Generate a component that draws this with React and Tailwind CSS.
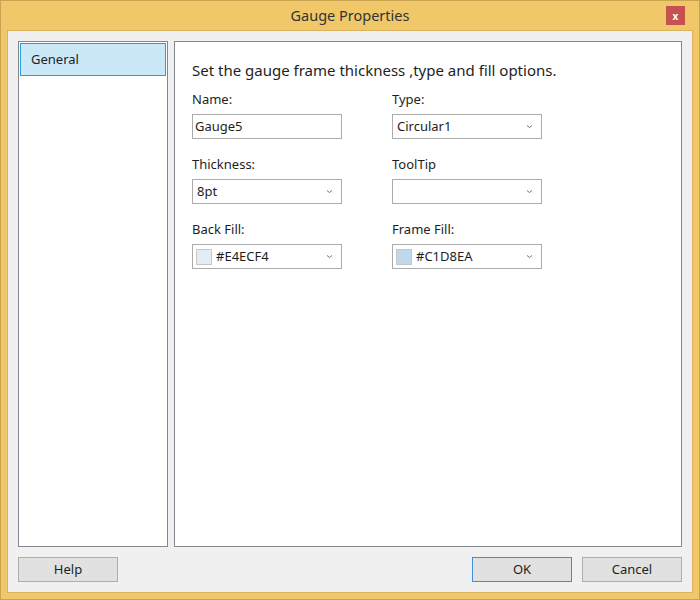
import React from "react";

const font = { fontFamily: '"Noto Sans", "Open Sans", sans-serif' };

function Chevron() {
  return (
    <svg width="7" height="5" viewBox="0 0 7 5" className="shrink-0">
      <path d="M1 1.5 L3.5 3.5 L6 1.5" fill="none" stroke="#707070" strokeWidth="1" />
    </svg>
  );
}

function Label({ children }) {
  return (
    <div className="h-[18px] flex items-end text-[13px] leading-[16px] text-[#1e1e1e] mb-[7px]">
      {children}
    </div>
  );
}

function TextBox({ value }) {
  return (
    <div className="h-[25px] w-[150px] border border-[#ababab] bg-white flex items-center pl-[2px] text-[13px] text-[#1e1e1e]">
      {value}
    </div>
  );
}

function Combo({ value, swatch }) {
  return (
    <div className="h-[25px] w-[150px] border border-[#ababab] bg-white flex items-center text-[13px] text-[#1e1e1e] pr-[8px]">
      {swatch ? (
        <div className="flex items-center pl-[3px] gap-[4px] flex-1">
          <div className="w-[16px] h-[16px] border border-[#c8c8c8]" style={{ background: swatch }} />
          <span>{value}</span>
        </div>
      ) : (
        <span className="pl-[4px] flex-1">{value}</span>
      )}
      <Chevron />
    </div>
  );
}

function Field({ label, children }) {
  return (
    <div className="flex flex-col w-[150px]">
      <Label>{label}</Label>
      {children}
    </div>
  );
}

function Button({ children, primary }) {
  return (
    <div
      className={
        "w-[100px] h-[25px] flex items-center justify-center bg-[#e1e1e1] text-[13px] text-[#1e1e1e] border " +
        (primary ? "border-[#3c8fe0]" : "border-[#adadad]")
      }
    >
      {children}
    </div>
  );
}

export default function App() {
  return (
    <div
      style={font}
      className="w-[700px] h-[600px] bg-[#f0c86a] border border-[#c9a450] flex flex-col px-[6px] pb-[6px]"
    >
      <div className="relative h-[29px] flex items-center justify-center text-[14.5px] text-[#333333]">
        Gauge Properties
        <div className="absolute right-[8px] top-[5px] w-[19px] h-[19px] bg-[#c75050] flex items-center justify-center text-white text-[10px] font-bold leading-none">
          x
        </div>
      </div>
      <div className="flex-1 border border-[#d9b35e] bg-[#f0f0f0] flex flex-col p-[10px] gap-[10px]">
        <div className="flex-1 flex gap-[6px]">
          <div className="w-[150px] border border-[#828790] bg-white p-[1px]">
            <div className="h-[33px] bg-[#cbe8f6] border border-[#26a0da] flex items-center pl-[10px] text-[13px] text-[#1e1e1e]">
              General
            </div>
          </div>
          <div className="flex-1 border border-[#828790] bg-white pl-[17px] pt-[18px]">
            <div className="text-[15px] leading-[20px] text-[#1e1e1e]">
              Set the gauge frame thickness ,type and fill options.
            </div>
            <div className="mt-[9px] grid grid-cols-[150px_150px] gap-x-[50px] gap-y-[15px]">
              <Field label="Name:">
                <TextBox value="Gauge5" />
              </Field>
              <Field label="Type:">
                <Combo value="Circular1" />
              </Field>
              <Field label="Thickness:">
                <Combo value="8pt" />
              </Field>
              <Field label="ToolTip">
                <Combo value="" />
              </Field>
              <Field label="Back Fill:">
                <Combo value="#E4ECF4" swatch="#E4ECF4" />
              </Field>
              <Field label="Frame Fill:">
                <Combo value="#C1D8EA" swatch="#C1D8EA" />
              </Field>
            </div>
          </div>
        </div>
        <div className="flex items-center gap-[10px]">
          <Button>Help</Button>
          <div className="flex-1" />
          <Button primary>OK</Button>
          <Button>Cancel</Button>
        </div>
      </div>
    </div>
  );
}
